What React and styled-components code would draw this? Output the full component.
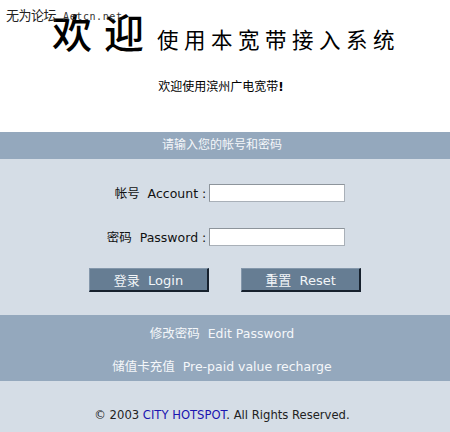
import React from 'react';
import styled, { createGlobalStyle } from 'styled-components';

const GlobalStyle = createGlobalStyle`
  html, body {
    margin: 0;
    padding: 0;
    background: #ffffff;
  }
  body {
    font-family: "DejaVu Sans", "Noto Sans CJK SC", sans-serif;
    color: #000;
  }
`;

const Page = styled.div`
  position: relative;
  width: 450px;
  display: flex;
  flex-direction: column;
`;

// site watermark stamped over the top-left corner
const Watermark = styled.div`
  position: absolute;
  left: 6px;
  top: 5px;
  font-family: "Noto Sans CJK SC", sans-serif;
  font-size: 13px;
  color: #222;
  letter-spacing: -0.5px;
  span {
    font-family: "DejaVu Sans Mono", monospace;
    font-size: 10px;
    letter-spacing: 0.6px;
    color: #333;
    margin-left: 7px;
  }
`;

const Top = styled.header`
  height: 132px;
  background: #fff;
  display: flex;
  flex-direction: column;
`;

const TitleRow = styled.div`
  display: flex;
  align-items: baseline;
  padding: 11px 0 0 52px;
  font-family: "Noto Sans CJK SC", sans-serif;
`;

const Welcome = styled.h1`
  margin: 0;
  font-size: 40px;
  line-height: 1;
  font-weight: 500;
  letter-spacing: 12px;
`;

const Subtitle = styled.h2`
  margin: 0 0 0 1px;
  font-size: 21.5px;
  line-height: 1;
  font-weight: 400;
  letter-spacing: 5.5px;
`;

const Tagline = styled.p`
  margin: 28px 0 0;
  padding-right: 8px;
  text-align: center;
  font-family: "Noto Sans CJK SC", sans-serif;
  font-size: 12px;
  line-height: 14px;
  b {
    font-family: "DejaVu Sans", sans-serif;
  }
`;

const Bar = styled.div`
  background: #94a8bd;
  color: #f4f7fa;
  display: flex;
  flex-direction: column;
  align-items: center;
  justify-content: center;
  height: ${p => p.$h}px;
  padding-top: ${p => p.$shift || 0}px;
  box-sizing: border-box;
  font-size: ${p => p.$size}px;
`;

const BarLine = styled.div`
  height: 33px;
  line-height: 33px;
  padding-right: 6px;
`;

const Panel = styled.section`
  background: #d5dde6;
  height: 156px;
  display: flex;
  flex-direction: column;
  align-items: center;
  padding-top: 24px;
  box-sizing: border-box;
`;

const FormGrid = styled.div`
  display: grid;
  grid-template-columns: auto 136px;
  column-gap: 3px;
  row-gap: 25px;
  align-items: center;
  margin-left: 2px;
`;

const Label = styled.label`
  text-align: right;
  font-size: 12.5px;
  color: #111;
  white-space: nowrap;
`;

const Input = styled.input`
  width: 136px;
  height: 18px;
  box-sizing: border-box;
  border: 1px solid #a9b0b8;
  border-top-color: #8d949b;
  border-left-color: #8d949b;
  background: #fff;
  padding: 0 2px;
  margin: 0;
  font-size: 12px;
`;

const Buttons = styled.div`
  display: flex;
  gap: 32px;
  margin-top: 22px;
`;

const Button = styled.button`
  width: 120px;
  height: 24px;
  box-sizing: border-box;
  background: #667d93;
  color: #f2f5f8;
  font-family: "DejaVu Sans", "Noto Sans CJK SC", sans-serif;
  font-size: 13px;
  border: 1px solid #8497ab;
  border-right: 2px solid #17212d;
  border-bottom: 2px solid #17212d;
  padding: 0;
  cursor: pointer;
`;

const Footer = styled.footer`
  background: #d5dde6;
  height: 51px;
  display: flex;
  align-items: flex-start;
  justify-content: center;
  padding: 27px 6px 0 0;
  box-sizing: border-box;
  font-size: 11.6px;
  color: #222;
  a {
    color: #1a14b0;
    text-decoration: none;
  }
`;

export default function App() {
  return (
    <Page>
      <GlobalStyle />
      <Watermark>
        无为论坛<span>Aetcn.net</span>
      </Watermark>
      <Top>
        <TitleRow>
          <Welcome>欢迎</Welcome>
          <Subtitle>使用本宽带接入系统</Subtitle>
        </TitleRow>
        <Tagline>
          欢迎使用滨州广电宽带<b>!</b>
        </Tagline>
      </Top>
      <Bar $h={27} $size={12}>
        <BarLine>请输入您的帐号和密码</BarLine>
      </Bar>
      <Panel>
        <FormGrid>
          <Label htmlFor="account">帐号&nbsp; Account :</Label>
          <Input id="account" type="text" />
          <Label htmlFor="password">密码&nbsp; Password :</Label>
          <Input id="password" type="password" />
        </FormGrid>
        <Buttons>
          <Button type="submit">登录&nbsp; Login</Button>
          <Button type="reset">重置&nbsp; Reset</Button>
        </Buttons>
      </Panel>
      <Bar $h={66} $size={12.5} $shift={4}>
        <BarLine>修改密码&nbsp; Edit Password</BarLine>
        <BarLine>储值卡充值&nbsp; Pre-paid value recharge</BarLine>
      </Bar>
      <Footer>
        <span>
          © 2003 <a href="#">CITY HOTSPOT</a>. All Rights Reserved.
        </span>
      </Footer>
    </Page>
  );
}
